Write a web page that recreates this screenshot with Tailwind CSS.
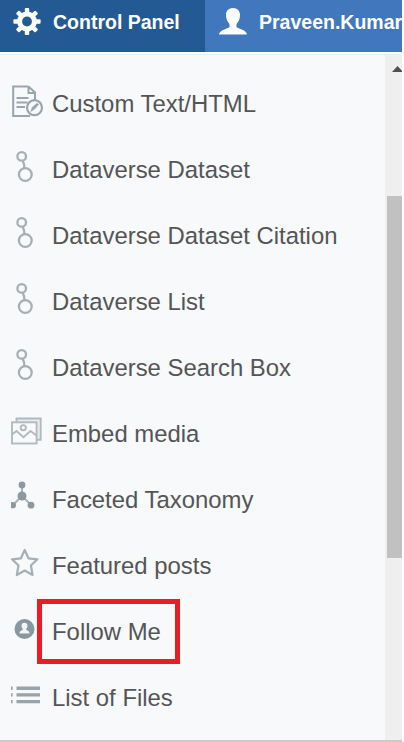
<!DOCTYPE html>
<html lang="en">
<head>
  <meta charset="UTF-8" />
  <meta name="viewport" content="width=device-width, initial-scale=1.0"/>
  <title>Control Panel</title>
  <script src="https://cdn.jsdelivr.net/npm/@tailwindcss/browser@4"></script>
</head>
<body class="bg-white overflow-hidden font-['Liberation_Sans',Arial,sans-serif]">
  <div class="w-[402px] h-[742px] flex flex-col overflow-hidden">

    <!-- Top tabs -->
    <header class="flex h-[52px] shrink-0 text-white font-bold text-[19.5px] whitespace-nowrap">
      <div class="w-[205px] bg-[#245a94] flex items-center shrink-0">
        <svg class="w-[53px] h-[52px] shrink-0" viewBox="0 0 53 52">
          <g transform="translate(27 21.5)" fill="#fff">
            <circle r="7.4" fill="none" stroke="#fff" stroke-width="5"/>
            <g id="teeth">
              <rect x="-2.2" y="-13.6" width="4.4" height="6" rx="1"/>
              <rect x="-2.2" y="7.6" width="4.4" height="6" rx="1"/>
              <rect x="-13.6" y="-2.2" width="6" height="4.4" rx="1"/>
              <rect x="7.6" y="-2.2" width="6" height="4.4" rx="1"/>
            </g>
            <use href="#teeth" transform="rotate(45)"/>
          </g>
        </svg>
        <span class="pb-[6px]">Control Panel</span>
      </div>
      <div class="flex-1 bg-[#4077bd] flex items-center overflow-hidden">
        <svg class="w-[54px] h-[52px] shrink-0" viewBox="0 0 54 52">
          <path d="M28 8c-4.500 0-7 3-7 7 0 4 1.500 7 3.500 9v3c-.5 1.500-10 2.500-10.500 7.500h28c-.5-5-10-6-10.500-7.500v-3c2-2 3.500-5 3.500-9 0-4-2.500-7-7-7z" fill="#fff"/>
        </svg>
        <span class="pb-[6px]">Praveen.Kumar</span>
      </div>
    </header>

    <div class="h-[3px] shrink-0 bg-white border-b border-[#e6eef6]"></div>

    <!-- Widget list with scrollbar -->
    <div class="flex flex-1 bg-[#f7f9fb] overflow-hidden">
      <ul class="flex-1 pt-4 text-[23.9px] text-[#555557] whitespace-nowrap">
        <li class="flex items-center h-[66px]">
          <svg class="w-[52px] h-[66px] shrink-0" viewBox="0 0 52 66" fill="none" stroke="#9ba5ac" stroke-width="2">
            <path d="M28.500 15.500H13.200v29.500H30M28.500 15.500l6.500 6V29M28.500 15.500v6.500H35"/>
            <path d="M16.500 27h12M16.500 31.500h11M16.500 36h8.500"/>
            <circle cx="34.500" cy="36.700" r="7.500" stroke-width="2.200" fill="#f7f9fb"/>
            <path d="M30.700 40.500l1.700-4.300 4.700-4 1.400 1.400-3.900 4.500z" fill="#9ba5ac" stroke="#9ba5ac" stroke-width=".6"/>
          </svg>
          <span>Custom Text/HTML</span>
        </li>
        <li class="flex items-center h-[66px]">
          <svg class="w-[52px] h-[66px] shrink-0" viewBox="0 0 52 66" fill="none" stroke="#a8afb3" stroke-width="2.300">
            <g id="node">
              <circle cx="21.700" cy="19.400" r="4.300"/>
              <circle cx="25.300" cy="37.500" r="6.400"/>
              <path d="M22.700 23.800q1.800 3 1.600 7.300"/>
            </g>
          </svg>
          <span>Dataverse Dataset</span>
        </li>
        <li class="flex items-center h-[66px]">
          <svg class="w-[52px] h-[66px] shrink-0" viewBox="0 0 52 66" fill="none" stroke="#a8afb3" stroke-width="2.300"><use href="#node"/></svg>
          <span>Dataverse Dataset Citation</span>
        </li>
        <li class="flex items-center h-[66px]">
          <svg class="w-[52px] h-[66px] shrink-0" viewBox="0 0 52 66" fill="none" stroke="#a8afb3" stroke-width="2.300"><use href="#node"/></svg>
          <span>Dataverse List</span>
        </li>
        <li class="flex items-center h-[66px]">
          <svg class="w-[52px] h-[66px] shrink-0" viewBox="0 0 52 66" fill="none" stroke="#a8afb3" stroke-width="2.300"><use href="#node"/></svg>
          <span>Dataverse Search Box</span>
        </li>
        <li class="flex items-center h-[66px]">
          <svg class="w-[52px] h-[66px] shrink-0" viewBox="0 0 52 66" fill="none" stroke="#b3babe" stroke-width="1.900">
            <path d="M16.500 21v-3.500h24.200v21.200H37" fill="#e6eaed"/>
            <rect x="12" y="21.300" width="24.600" height="21.200" fill="#f7f9fb"/>
            <circle cx="23.300" cy="26.700" r="2.600"/>
            <path d="M12 33.500l4.500-3.500 7 6.300 7-6.300 6 4.500"/>
          </svg>
          <span>Embed media</span>
        </li>
        <li class="flex items-center h-[66px]">
          <svg class="w-[52px] h-[66px] shrink-0" viewBox="0 0 52 66" fill="#8d989f">
            <path d="M22 18v11M22 29l-9 9M22 29l9 9" stroke="#a9b3b9" stroke-width="2"/>
            <circle cx="22" cy="18" r="3.400"/>
            <circle cx="22" cy="29" r="4.500"/>
            <path d="M11 35.200q5-.9 5 3t-5 2.900z"/>
            <circle cx="31" cy="38.200" r="3.400"/>
          </svg>
          <span>Faceted Taxonomy</span>
        </li>
        <li class="flex items-center h-[66px]">
          <svg class="w-[52px] h-[66px] shrink-0" viewBox="0 0 52 66" fill="none" stroke="#a6afb5" stroke-width="2.200" stroke-linejoin="round">
            <path d="M24.700 17l3.800 8.300 8.900 1-6.500 6.200 1.700 9.500-7.900-4.500-7.900 4.500 1.700-9.500-6.500-6.200 8.900-1z"/>
          </svg>
          <span>Featured posts</span>
        </li>
        <li class="flex items-center h-[66px] relative">
          <svg class="w-[52px] h-[66px] shrink-0" viewBox="0 0 52 66">
            <circle cx="24.500" cy="30" r="10" fill="#8b979e"/>
            <path d="M24.500 23.800c-1.900 0-3 1.300-3 3 0 1.600.7 2.700 1.500 3.500-.3 1.300-3.500 1-3.500 4.200h10c0-3.200-3.200-2.900-3.500-4.200.8-.8 1.500-1.900 1.500-3.500 0-1.700-1.100-3-3-3z" fill="#f2f4f6"/>
          </svg>
          <span>Follow Me</span>
          <div class="absolute left-[37px] top-0 w-[143px] h-[65px] border-5 border-[#ea1c26]"></div>
        </li>
        <li class="flex items-center h-[66px]">
          <svg class="w-[52px] h-[66px] shrink-0" viewBox="0 0 52 66" stroke="#98a3aa" stroke-width="3.400">
            <path d="M16.500 23.200H40M16.500 29.900H40M16.500 36.600H40" />
            <path d="M11 23.200h1.600M11 29.900h1.600M11 36.600h1.600"/>
          </svg>
          <span>List of Files</span>
        </li>
      </ul>
      <div class="w-[17px] bg-[#efefef] flex flex-col items-end shrink-0">
        <svg class="w-[15px] h-[141px] shrink-0" viewBox="0 0 15 141"><path d="M5 17l5.500-6 4.500 4.800V17z" fill="#505050"/></svg>
        <div class="w-[15px] h-[362px] bg-[#c1c1c1] shrink-0"></div>
      </div>
    </div>

    <div class="h-[2px] shrink-0 bg-[#c9c9c9]"></div>
  </div>
</body>
</html>
